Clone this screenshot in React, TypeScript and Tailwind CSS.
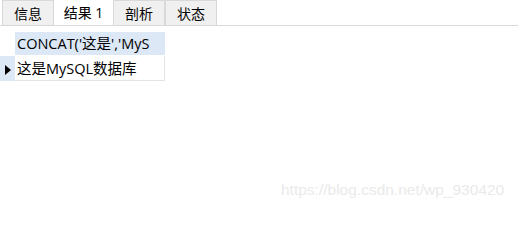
import React from "react";

const font = { fontFamily: '"Open Sans", "Noto Sans CJK SC", sans-serif' };

function Tab({ label, active }: { label: string; active?: boolean }) {
  if (active) {
    return (
      <div className="flex h-[26px] w-[59px] items-center justify-center bg-white text-[14px] text-black">
        {label}
      </div>
    );
  }
  return (
    <div className="mt-[1px] flex h-[25px] w-[52px] items-center justify-center border border-b-0 border-[#d9d9d9] bg-[#f0f0f0] text-[14px] text-black">
      {label}
    </div>
  );
}

export default function App() {
  return (
    <div className="relative h-[211px] w-[518px] overflow-hidden bg-white" style={font}>
      {/* Tabs */}
      <div className="flex h-[26px] items-end border-b border-[#d9d9d9] pl-[2px]">
        <Tab label="信息" />
        <Tab label="结果 1" active />
        <Tab label="剖析" />
        <Tab label="状态" />
      </div>

      {/* Grid */}
      <div className="mt-[6px] flex flex-col">
        <div className="flex h-[23px]">
          <div className="w-[15px]" />
          <div className="flex w-[150px] items-center overflow-hidden whitespace-nowrap bg-[#dce8f5] pl-[2px] pt-[1px] text-[14.5px] text-black">
            CONCAT('这是','MyS
          </div>
        </div>
        <div className="mt-[1px] flex h-[25px]">
          <div className="flex w-[15px] items-center justify-center bg-[#dce8f5] pt-[2px]">
            <svg width="6" height="10" viewBox="0 0 6 10">
              <path d="M0 0 L6 5 L0 10 Z" fill="#000" />
            </svg>
          </div>
          <div className="flex w-[150px] items-center overflow-hidden whitespace-nowrap border-r border-b border-[#e3e3e3] pl-[2px] pt-[2px] text-[14.5px] text-black">
            这是MySQL数据库
          </div>
        </div>
      </div>

      {/* Watermark */}
      <div
        className="absolute left-[281px] top-[178px] text-[15.5px] text-[#eaeaea]"
        style={{ fontFamily: '"Liberation Sans", sans-serif' }}
      >
        https://blog.csdn.net/wp_930420
      </div>
    </div>
  );
}
